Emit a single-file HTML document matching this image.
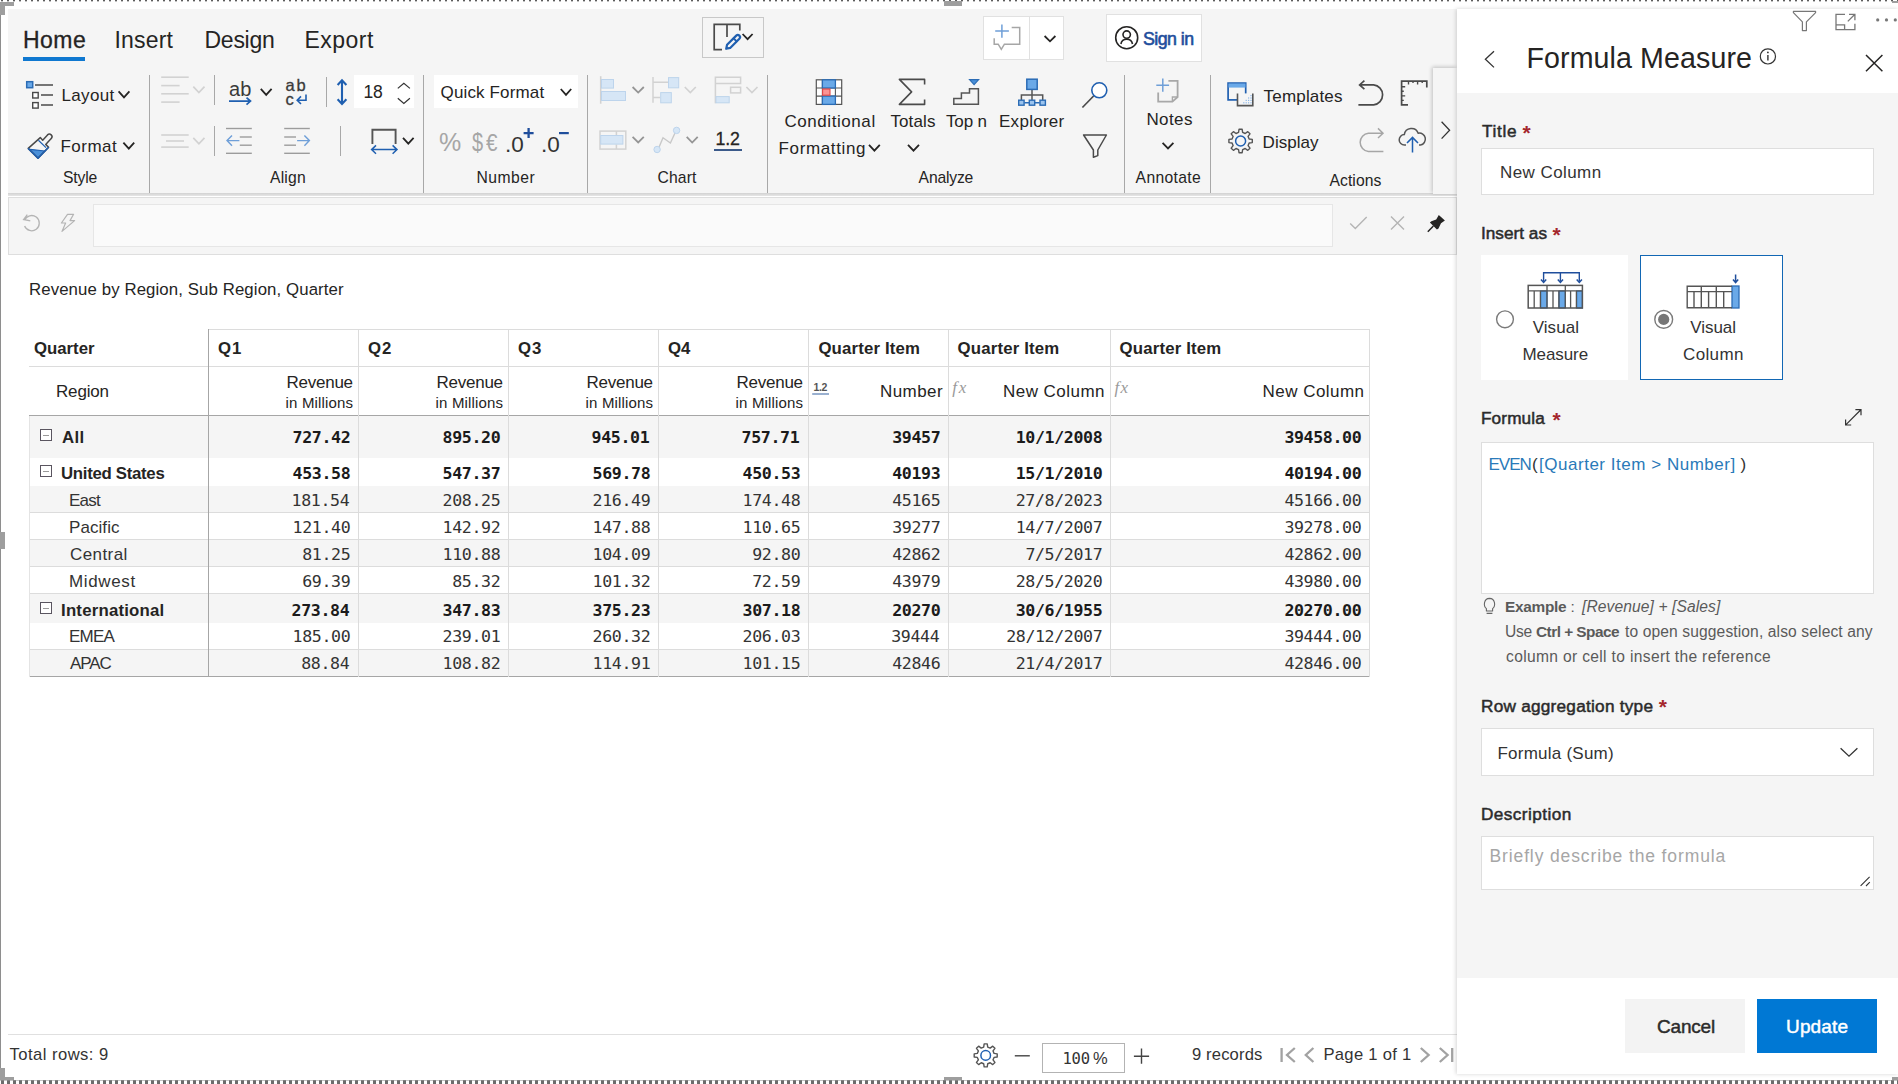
<!DOCTYPE html>
<html lang="en"><head><meta charset="utf-8"><title>Formula Measure</title>
<style>
html,body{margin:0;padding:0;}
body{width:1898px;height:1084px;position:relative;overflow:hidden;background:#fff;font-family:"Liberation Sans",sans-serif;color:#252423;}
.a{position:absolute;display:block;}
.t{position:absolute;white-space:pre;line-height:1;}
</style></head><body>
<div class="a" style="left:8px;top:9px;width:1449px;height:186px;background:#f5f5f5;"></div>
<div class="a" style="left:8px;top:193px;width:1449px;height:3px;background:linear-gradient(#d2d2d2,#e6e6e6);"></div>
<div class="a" style="left:8px;top:197px;width:1449px;height:58px;background:#f5f5f5;border:1px solid #dedede;box-sizing:border-box;"></div>
<div class="a" style="left:93px;top:204px;width:1240px;height:43px;background:#fafafa;border:1px solid #e6e6e6;box-sizing:border-box;"></div>
<div class="t" style="left:23.00px;top:29.01px;font-size:23px;color:#252423;letter-spacing:0.480px;-webkit-text-stroke:0.3px;">Home</div>
<div class="a" style="left:23px;top:57px;width:62px;height:4px;background:#0f78d0;"></div>
<div class="t" style="left:114.50px;top:29.01px;font-size:23px;color:#252423;letter-spacing:0.174px;">Insert</div>
<div class="t" style="left:204.50px;top:29.01px;font-size:23px;color:#252423;letter-spacing:-0.261px;">Design</div>
<div class="t" style="left:304.50px;top:29.01px;font-size:23px;color:#252423;letter-spacing:0.483px;">Export</div>
<div class="a" style="left:149px;top:75px;width:1px;height:118px;background:#a8a8a8;"></div>
<div class="a" style="left:423px;top:75px;width:1px;height:118px;background:#a8a8a8;"></div>
<div class="a" style="left:587px;top:75px;width:1px;height:118px;background:#a8a8a8;"></div>
<div class="a" style="left:767px;top:75px;width:1px;height:118px;background:#a8a8a8;"></div>
<div class="a" style="left:1124px;top:75px;width:1px;height:118px;background:#a8a8a8;"></div>
<div class="a" style="left:1210px;top:75px;width:1px;height:118px;background:#a8a8a8;"></div>
<div class="a" style="left:214px;top:75px;width:1px;height:30px;background:#a8a8a8;"></div>
<div class="a" style="left:326px;top:77px;width:1px;height:30px;background:#a8a8a8;"></div>
<div class="a" style="left:214px;top:126px;width:1px;height:30px;background:#a8a8a8;"></div>
<div class="a" style="left:340px;top:126px;width:1px;height:30px;background:#a8a8a8;"></div>
<div class="t" style="left:61.50px;top:87.00px;font-size:17px;color:#252423;letter-spacing:0.336px;">Layout</div>
<div class="t" style="left:60.50px;top:138.00px;font-size:17px;color:#252423;letter-spacing:0.477px;">Format</div>
<div class="t" style="left:63.00px;top:170.00px;font-size:15.7px;color:#252423;letter-spacing:-0.163px;">Style</div>
<div class="t" style="left:270.00px;top:170.00px;font-size:15.7px;color:#252423;letter-spacing:0.210px;">Align</div>
<div class="a" style="left:354px;top:75px;width:60px;height:33px;background:#fff;"></div>
<div class="t" style="left:363.50px;top:84.01px;font-size:17.5px;color:#252423;letter-spacing:-0.233px;">18</div>
<div class="a" style="left:434px;top:75px;width:144px;height:33px;background:#fff;"></div>
<div class="t" style="left:440.60px;top:84.01px;font-size:17px;color:#252423;letter-spacing:0.137px;">Quick Format</div>
<div class="t" style="left:439.00px;top:130.00px;font-size:25px;color:#a6a6a6;">%</div>
<div class="t" style="left:472.00px;top:130.00px;font-size:25px;color:#a6a6a6;transform:scaleX(.8);transform-origin:0 0;">$</div>
<div class="t" style="left:486.00px;top:131.02px;font-size:24px;color:#a6a6a6;transform:scaleX(.86);transform-origin:0 0;">€</div>
<div class="t" style="left:505.00px;top:134.02px;font-size:22.5px;color:#333;letter-spacing:0.049px;">.0</div>
<div class="t" style="left:541.00px;top:134.02px;font-size:22.5px;color:#333;letter-spacing:0.049px;">.0</div>
<div class="t" style="left:476.60px;top:170.00px;font-size:15.7px;color:#252423;letter-spacing:0.446px;">Number</div>
<div class="t" style="left:715.60px;top:131.00px;font-size:17.8px;color:#252423;letter-spacing:-0.165px;-webkit-text-stroke:0.3px;">1.2</div>
<div class="a" style="left:714px;top:149px;width:28px;height:2px;background:#3b5a8a;"></div>
<div class="t" style="left:657.60px;top:170.00px;font-size:15.7px;color:#252423;letter-spacing:0.099px;">Chart</div>
<div class="t" style="left:784.40px;top:113.01px;font-size:17px;color:#252423;letter-spacing:0.572px;">Conditional</div>
<div class="t" style="left:778.60px;top:140.01px;font-size:17px;color:#252423;letter-spacing:0.623px;">Formatting</div>
<div class="t" style="left:890.40px;top:113.01px;font-size:17px;color:#252423;letter-spacing:0.138px;">Totals</div>
<div class="t" style="left:946.00px;top:113.01px;font-size:17px;color:#252423;letter-spacing:-0.133px;">Top n</div>
<div class="t" style="left:999.00px;top:113.01px;font-size:17px;color:#252423;letter-spacing:0.280px;">Explorer</div>
<div class="t" style="left:918.60px;top:170.00px;font-size:15.7px;color:#252423;letter-spacing:-0.181px;">Analyze</div>
<div class="t" style="left:1146.40px;top:111.01px;font-size:17px;color:#252423;letter-spacing:0.423px;">Notes</div>
<div class="t" style="left:1135.60px;top:170.00px;font-size:15.7px;color:#252423;letter-spacing:0.332px;">Annotate</div>
<div class="t" style="left:1263.60px;top:88.01px;font-size:17px;color:#252423;letter-spacing:0.178px;">Templates</div>
<div class="t" style="left:1262.60px;top:134.01px;font-size:17px;color:#252423;letter-spacing:0.027px;">Display</div>
<div class="t" style="left:1329.60px;top:173.00px;font-size:15.7px;color:#252423;letter-spacing:0.033px;">Actions</div>
<div class="a" style="left:702px;top:17px;width:62px;height:41px;background:#f5f5f5;border:1px solid #c8c8c8;box-sizing:border-box;"></div>
<div class="a" style="left:983px;top:16px;width:81px;height:44px;background:#fff;border:1px solid #e1e1e1;box-sizing:border-box;"></div>
<div class="a" style="left:1029px;top:16px;width:1px;height:44px;background:#e1e1e1;"></div>
<div class="a" style="left:1106px;top:14px;width:96px;height:48px;background:#fff;border:1px solid #e1e1e1;box-sizing:border-box;"></div>
<div class="t" style="left:1143.00px;top:31.01px;font-size:17.8px;color:#1f4e9c;letter-spacing:-0.547px;-webkit-text-stroke:0.6px;">Sign in</div>
<div class="a" style="left:1433px;top:68px;width:24px;height:126px;background:#f5f5f5;box-shadow:-1px -1px 4px rgba(0,0,0,.22);"></div>
<div class="t" style="left:29.00px;top:282.01px;font-size:16.8px;color:#252423;letter-spacing:0.107px;">Revenue by Region, Sub Region, Quarter</div>
<div class="t" style="left:229.00px;top:79.00px;font-size:20px;color:#3a3a3a;letter-spacing:0.077px;">ab</div>
<div class="t" style="left:285.50px;top:77.02px;font-size:16.5px;color:#3a3a3a;letter-spacing:1.723px;-webkit-text-stroke:0.3px;">ab</div>
<div class="t" style="left:285.50px;top:91.01px;font-size:16.5px;color:#3a3a3a;-webkit-text-stroke:0.3px;">c</div>
<div class="t" style="left:813.50px;top:382.01px;font-size:10.5px;color:#555;font-weight:bold;letter-spacing:-0.428px;">1.2</div>
<div class="t" style="left:952.30px;top:379.01px;font-size:17px;color:#9a9a9a;font-family:'Liberation Serif',serif;font-style:italic;letter-spacing:1.677px;">fx</div>
<div class="t" style="left:1114.40px;top:379.01px;font-size:17px;color:#9a9a9a;font-family:'Liberation Serif',serif;font-style:italic;letter-spacing:1.477px;">fx</div>
<div class="a" style="left:29px;top:416px;width:1341px;height:42px;background:#f5f5f5;"></div>
<div class="a" style="left:29px;top:486px;width:1341px;height:27px;background:#f5f5f5;"></div>
<div class="a" style="left:29px;top:540px;width:1341px;height:27px;background:#f5f5f5;"></div>
<div class="a" style="left:29px;top:594px;width:1341px;height:29px;background:#f5f5f5;"></div>
<div class="a" style="left:29px;top:650px;width:1341px;height:27px;background:#f5f5f5;"></div>
<div class="a" style="left:208px;top:329px;width:1162px;height:1px;background:#dcdcdc;"></div>
<div class="a" style="left:29px;top:366px;width:1341px;height:1px;background:#dcdcdc;"></div>
<div class="a" style="left:29px;top:415px;width:1341px;height:1px;background:#a6a6a6;"></div>
<div class="a" style="left:29px;top:512px;width:1341px;height:1px;background:#dcdcdc;"></div>
<div class="a" style="left:29px;top:539px;width:1341px;height:1px;background:#dcdcdc;"></div>
<div class="a" style="left:29px;top:566px;width:1341px;height:1px;background:#dcdcdc;"></div>
<div class="a" style="left:29px;top:593px;width:1341px;height:1px;background:#dcdcdc;"></div>
<div class="a" style="left:29px;top:649px;width:1341px;height:1px;background:#dcdcdc;"></div>
<div class="a" style="left:29px;top:676px;width:1341px;height:1px;background:#a6a6a6;"></div>
<div class="a" style="left:29px;top:416px;width:1px;height:261px;background:#e4e4e4;"></div>
<div class="a" style="left:208px;top:329px;width:1px;height:348px;background:#a6a6a6;"></div>
<div class="a" style="left:358px;top:329px;width:1px;height:348px;background:#dcdcdc;"></div>
<div class="a" style="left:508px;top:329px;width:1px;height:348px;background:#dcdcdc;"></div>
<div class="a" style="left:658px;top:329px;width:1px;height:348px;background:#dcdcdc;"></div>
<div class="a" style="left:808px;top:329px;width:1px;height:348px;background:#dcdcdc;"></div>
<div class="a" style="left:948px;top:329px;width:1px;height:348px;background:#dcdcdc;"></div>
<div class="a" style="left:1110px;top:329px;width:1px;height:348px;background:#dcdcdc;"></div>
<div class="a" style="left:1369px;top:329px;width:1px;height:348px;background:#dcdcdc;"></div>
<div class="t" style="left:34.00px;top:341.01px;font-size:16.8px;color:#252423;font-weight:bold;letter-spacing:-0.015px;">Quarter</div>
<div class="t" style="left:218.00px;top:341.01px;font-size:16.8px;color:#252423;font-weight:bold;letter-spacing:0.947px;">Q1</div>
<div class="t" style="left:368.00px;top:341.01px;font-size:16.8px;color:#252423;font-weight:bold;letter-spacing:0.947px;">Q2</div>
<div class="t" style="left:518.00px;top:341.01px;font-size:16.8px;color:#252423;font-weight:bold;letter-spacing:0.947px;">Q3</div>
<div class="t" style="left:668.00px;top:341.01px;font-size:16.8px;color:#252423;font-weight:bold;letter-spacing:-0.053px;">Q4</div>
<div class="t" style="left:818.40px;top:341.01px;font-size:16.8px;color:#252423;font-weight:bold;letter-spacing:0.158px;">Quarter Item</div>
<div class="t" style="left:957.60px;top:341.01px;font-size:16.8px;color:#252423;font-weight:bold;letter-spacing:0.158px;">Quarter Item</div>
<div class="t" style="left:1119.60px;top:341.01px;font-size:16.8px;color:#252423;font-weight:bold;letter-spacing:0.158px;">Quarter Item</div>
<div class="t" style="left:56.00px;top:383.01px;font-size:17px;color:#252423;letter-spacing:-0.163px;">Region</div>
<div class="t" style="left:286.60px;top:374.00px;font-size:17px;color:#252423;letter-spacing:-0.266px;">Revenue</div>
<div class="t" style="left:285.60px;top:395.01px;font-size:15px;color:#252423;letter-spacing:0.165px;">in Millions</div>
<div class="t" style="left:436.60px;top:374.00px;font-size:17px;color:#252423;letter-spacing:-0.266px;">Revenue</div>
<div class="t" style="left:435.60px;top:395.01px;font-size:15px;color:#252423;letter-spacing:0.165px;">in Millions</div>
<div class="t" style="left:586.60px;top:374.00px;font-size:17px;color:#252423;letter-spacing:-0.266px;">Revenue</div>
<div class="t" style="left:585.60px;top:395.01px;font-size:15px;color:#252423;letter-spacing:0.165px;">in Millions</div>
<div class="t" style="left:736.60px;top:374.00px;font-size:17px;color:#252423;letter-spacing:-0.266px;">Revenue</div>
<div class="t" style="left:735.60px;top:395.01px;font-size:15px;color:#252423;letter-spacing:0.165px;">in Millions</div>
<div class="t" style="left:880.00px;top:383.01px;font-size:17px;color:#252423;letter-spacing:0.440px;">Number</div>
<div class="t" style="left:1003.00px;top:383.01px;font-size:17px;color:#252423;letter-spacing:0.461px;">New Column</div>
<div class="t" style="left:1262.60px;top:383.01px;font-size:17px;color:#252423;letter-spacing:0.461px;">New Column</div>
<div class="t" style="left:62.00px;top:430.00px;font-size:16.8px;color:#252423;font-weight:bold;letter-spacing:0.409px;">All</div>
<div class="t" style="left:292.61px;top:430.01px;font-size:16.6px;color:#1b1b1b;font-weight:bold;font-family:'DejaVu Sans Mono',monospace;letter-spacing:-0.373px;">727.42</div>
<div class="t" style="left:442.61px;top:430.01px;font-size:16.6px;color:#1b1b1b;font-weight:bold;font-family:'DejaVu Sans Mono',monospace;letter-spacing:-0.373px;">895.20</div>
<div class="t" style="left:591.61px;top:430.01px;font-size:16.6px;color:#1b1b1b;font-weight:bold;font-family:'DejaVu Sans Mono',monospace;letter-spacing:-0.373px;">945.01</div>
<div class="t" style="left:741.61px;top:430.01px;font-size:16.6px;color:#1b1b1b;font-weight:bold;font-family:'DejaVu Sans Mono',monospace;letter-spacing:-0.373px;">757.71</div>
<div class="t" style="left:892.23px;top:430.01px;font-size:16.6px;color:#1b1b1b;font-weight:bold;font-family:'DejaVu Sans Mono',monospace;letter-spacing:-0.373px;">39457</div>
<div class="t" style="left:1015.76px;top:430.01px;font-size:16.6px;color:#1b1b1b;font-weight:bold;font-family:'DejaVu Sans Mono',monospace;letter-spacing:-0.373px;">10/1/2008</div>
<div class="t" style="left:1284.38px;top:430.01px;font-size:16.6px;color:#1b1b1b;font-weight:bold;font-family:'DejaVu Sans Mono',monospace;letter-spacing:-0.373px;">39458.00</div>
<div class="a" style="left:40px;top:429px;width:12px;height:12px;background:#fff;border:1px solid #5a5560;box-sizing:border-box;"></div>
<div class="a" style="left:43px;top:434.5px;width:6px;height:1.3px;background:#9a9a9a;"></div>
<div class="t" style="left:61.00px;top:466.00px;font-size:16.8px;color:#252423;font-weight:bold;letter-spacing:-0.292px;">United States</div>
<div class="t" style="left:292.61px;top:466.01px;font-size:16.6px;color:#1b1b1b;font-weight:bold;font-family:'DejaVu Sans Mono',monospace;letter-spacing:-0.373px;">453.58</div>
<div class="t" style="left:442.61px;top:466.01px;font-size:16.6px;color:#1b1b1b;font-weight:bold;font-family:'DejaVu Sans Mono',monospace;letter-spacing:-0.373px;">547.37</div>
<div class="t" style="left:592.61px;top:466.01px;font-size:16.6px;color:#1b1b1b;font-weight:bold;font-family:'DejaVu Sans Mono',monospace;letter-spacing:-0.373px;">569.78</div>
<div class="t" style="left:742.61px;top:466.01px;font-size:16.6px;color:#1b1b1b;font-weight:bold;font-family:'DejaVu Sans Mono',monospace;letter-spacing:-0.373px;">450.53</div>
<div class="t" style="left:892.23px;top:466.01px;font-size:16.6px;color:#1b1b1b;font-weight:bold;font-family:'DejaVu Sans Mono',monospace;letter-spacing:-0.373px;">40193</div>
<div class="t" style="left:1015.76px;top:466.01px;font-size:16.6px;color:#1b1b1b;font-weight:bold;font-family:'DejaVu Sans Mono',monospace;letter-spacing:-0.373px;">15/1/2010</div>
<div class="t" style="left:1284.38px;top:466.01px;font-size:16.6px;color:#1b1b1b;font-weight:bold;font-family:'DejaVu Sans Mono',monospace;letter-spacing:-0.373px;">40194.00</div>
<div class="a" style="left:40px;top:465px;width:12px;height:12px;background:#fff;border:1px solid #5a5560;box-sizing:border-box;"></div>
<div class="a" style="left:43px;top:470.5px;width:6px;height:1.3px;background:#9a9a9a;"></div>
<div class="t" style="left:69.00px;top:492.01px;font-size:17px;color:#333;letter-spacing:-0.764px;">East</div>
<div class="t" style="left:291.61px;top:493.01px;font-size:16.6px;color:#333;font-family:'DejaVu Sans Mono',monospace;letter-spacing:-0.373px;">181.54</div>
<div class="t" style="left:442.61px;top:493.01px;font-size:16.6px;color:#333;font-family:'DejaVu Sans Mono',monospace;letter-spacing:-0.373px;">208.25</div>
<div class="t" style="left:592.61px;top:493.01px;font-size:16.6px;color:#333;font-family:'DejaVu Sans Mono',monospace;letter-spacing:-0.373px;">216.49</div>
<div class="t" style="left:742.61px;top:493.01px;font-size:16.6px;color:#333;font-family:'DejaVu Sans Mono',monospace;letter-spacing:-0.373px;">174.48</div>
<div class="t" style="left:892.23px;top:493.01px;font-size:16.6px;color:#333;font-family:'DejaVu Sans Mono',monospace;letter-spacing:-0.373px;">45165</div>
<div class="t" style="left:1015.76px;top:493.01px;font-size:16.6px;color:#333;font-family:'DejaVu Sans Mono',monospace;letter-spacing:-0.373px;">27/8/2023</div>
<div class="t" style="left:1284.38px;top:493.01px;font-size:16.6px;color:#333;font-family:'DejaVu Sans Mono',monospace;letter-spacing:-0.373px;">45166.00</div>
<div class="t" style="left:69.00px;top:519.01px;font-size:17px;color:#333;letter-spacing:0.072px;">Pacific</div>
<div class="t" style="left:292.61px;top:520.00px;font-size:16.6px;color:#333;font-family:'DejaVu Sans Mono',monospace;letter-spacing:-0.373px;">121.40</div>
<div class="t" style="left:442.61px;top:520.00px;font-size:16.6px;color:#333;font-family:'DejaVu Sans Mono',monospace;letter-spacing:-0.373px;">142.92</div>
<div class="t" style="left:592.61px;top:520.00px;font-size:16.6px;color:#333;font-family:'DejaVu Sans Mono',monospace;letter-spacing:-0.373px;">147.88</div>
<div class="t" style="left:742.61px;top:520.00px;font-size:16.6px;color:#333;font-family:'DejaVu Sans Mono',monospace;letter-spacing:-0.373px;">110.65</div>
<div class="t" style="left:892.23px;top:520.00px;font-size:16.6px;color:#333;font-family:'DejaVu Sans Mono',monospace;letter-spacing:-0.373px;">39277</div>
<div class="t" style="left:1015.76px;top:520.00px;font-size:16.6px;color:#333;font-family:'DejaVu Sans Mono',monospace;letter-spacing:-0.373px;">14/7/2007</div>
<div class="t" style="left:1284.38px;top:520.00px;font-size:16.6px;color:#333;font-family:'DejaVu Sans Mono',monospace;letter-spacing:-0.373px;">39278.00</div>
<div class="t" style="left:70.00px;top:546.01px;font-size:17px;color:#333;letter-spacing:0.413px;">Central</div>
<div class="t" style="left:302.23px;top:547.01px;font-size:16.6px;color:#333;font-family:'DejaVu Sans Mono',monospace;letter-spacing:-0.373px;">81.25</div>
<div class="t" style="left:442.61px;top:547.01px;font-size:16.6px;color:#333;font-family:'DejaVu Sans Mono',monospace;letter-spacing:-0.373px;">110.88</div>
<div class="t" style="left:592.61px;top:547.01px;font-size:16.6px;color:#333;font-family:'DejaVu Sans Mono',monospace;letter-spacing:-0.373px;">104.09</div>
<div class="t" style="left:752.23px;top:547.01px;font-size:16.6px;color:#333;font-family:'DejaVu Sans Mono',monospace;letter-spacing:-0.373px;">92.80</div>
<div class="t" style="left:892.23px;top:547.01px;font-size:16.6px;color:#333;font-family:'DejaVu Sans Mono',monospace;letter-spacing:-0.373px;">42862</div>
<div class="t" style="left:1025.38px;top:547.01px;font-size:16.6px;color:#333;font-family:'DejaVu Sans Mono',monospace;letter-spacing:-0.373px;">7/5/2017</div>
<div class="t" style="left:1284.38px;top:547.01px;font-size:16.6px;color:#333;font-family:'DejaVu Sans Mono',monospace;letter-spacing:-0.373px;">42862.00</div>
<div class="t" style="left:69.00px;top:573.01px;font-size:17px;color:#333;letter-spacing:0.646px;">Midwest</div>
<div class="t" style="left:302.23px;top:574.00px;font-size:16.6px;color:#333;font-family:'DejaVu Sans Mono',monospace;letter-spacing:-0.373px;">69.39</div>
<div class="t" style="left:452.23px;top:574.00px;font-size:16.6px;color:#333;font-family:'DejaVu Sans Mono',monospace;letter-spacing:-0.373px;">85.32</div>
<div class="t" style="left:592.61px;top:574.00px;font-size:16.6px;color:#333;font-family:'DejaVu Sans Mono',monospace;letter-spacing:-0.373px;">101.32</div>
<div class="t" style="left:752.23px;top:574.00px;font-size:16.6px;color:#333;font-family:'DejaVu Sans Mono',monospace;letter-spacing:-0.373px;">72.59</div>
<div class="t" style="left:892.23px;top:574.00px;font-size:16.6px;color:#333;font-family:'DejaVu Sans Mono',monospace;letter-spacing:-0.373px;">43979</div>
<div class="t" style="left:1015.76px;top:574.00px;font-size:16.6px;color:#333;font-family:'DejaVu Sans Mono',monospace;letter-spacing:-0.373px;">28/5/2020</div>
<div class="t" style="left:1284.38px;top:574.00px;font-size:16.6px;color:#333;font-family:'DejaVu Sans Mono',monospace;letter-spacing:-0.373px;">43980.00</div>
<div class="t" style="left:61.00px;top:603.00px;font-size:16.8px;color:#252423;font-weight:bold;letter-spacing:0.214px;">International</div>
<div class="t" style="left:291.61px;top:603.01px;font-size:16.6px;color:#1b1b1b;font-weight:bold;font-family:'DejaVu Sans Mono',monospace;letter-spacing:-0.373px;">273.84</div>
<div class="t" style="left:442.61px;top:603.01px;font-size:16.6px;color:#1b1b1b;font-weight:bold;font-family:'DejaVu Sans Mono',monospace;letter-spacing:-0.373px;">347.83</div>
<div class="t" style="left:592.61px;top:603.01px;font-size:16.6px;color:#1b1b1b;font-weight:bold;font-family:'DejaVu Sans Mono',monospace;letter-spacing:-0.373px;">375.23</div>
<div class="t" style="left:742.61px;top:603.01px;font-size:16.6px;color:#1b1b1b;font-weight:bold;font-family:'DejaVu Sans Mono',monospace;letter-spacing:-0.373px;">307.18</div>
<div class="t" style="left:892.23px;top:603.01px;font-size:16.6px;color:#1b1b1b;font-weight:bold;font-family:'DejaVu Sans Mono',monospace;letter-spacing:-0.373px;">20270</div>
<div class="t" style="left:1015.76px;top:603.01px;font-size:16.6px;color:#1b1b1b;font-weight:bold;font-family:'DejaVu Sans Mono',monospace;letter-spacing:-0.373px;">30/6/1955</div>
<div class="t" style="left:1284.38px;top:603.01px;font-size:16.6px;color:#1b1b1b;font-weight:bold;font-family:'DejaVu Sans Mono',monospace;letter-spacing:-0.373px;">20270.00</div>
<div class="a" style="left:40px;top:602px;width:12px;height:12px;background:#fff;border:1px solid #5a5560;box-sizing:border-box;"></div>
<div class="a" style="left:43px;top:607.5px;width:6px;height:1.3px;background:#9a9a9a;"></div>
<div class="t" style="left:69.00px;top:628.01px;font-size:17px;color:#333;letter-spacing:-0.780px;">EMEA</div>
<div class="t" style="left:292.61px;top:629.01px;font-size:16.6px;color:#333;font-family:'DejaVu Sans Mono',monospace;letter-spacing:-0.373px;">185.00</div>
<div class="t" style="left:442.61px;top:629.01px;font-size:16.6px;color:#333;font-family:'DejaVu Sans Mono',monospace;letter-spacing:-0.373px;">239.01</div>
<div class="t" style="left:592.61px;top:629.01px;font-size:16.6px;color:#333;font-family:'DejaVu Sans Mono',monospace;letter-spacing:-0.373px;">260.32</div>
<div class="t" style="left:742.61px;top:629.01px;font-size:16.6px;color:#333;font-family:'DejaVu Sans Mono',monospace;letter-spacing:-0.373px;">206.03</div>
<div class="t" style="left:891.23px;top:629.01px;font-size:16.6px;color:#333;font-family:'DejaVu Sans Mono',monospace;letter-spacing:-0.373px;">39444</div>
<div class="t" style="left:1006.15px;top:629.01px;font-size:16.6px;color:#333;font-family:'DejaVu Sans Mono',monospace;letter-spacing:-0.373px;">28/12/2007</div>
<div class="t" style="left:1284.38px;top:629.01px;font-size:16.6px;color:#333;font-family:'DejaVu Sans Mono',monospace;letter-spacing:-0.373px;">39444.00</div>
<div class="t" style="left:70.00px;top:655.01px;font-size:17px;color:#333;letter-spacing:-1.085px;">APAC</div>
<div class="t" style="left:301.23px;top:656.00px;font-size:16.6px;color:#333;font-family:'DejaVu Sans Mono',monospace;letter-spacing:-0.373px;">88.84</div>
<div class="t" style="left:442.61px;top:656.00px;font-size:16.6px;color:#333;font-family:'DejaVu Sans Mono',monospace;letter-spacing:-0.373px;">108.82</div>
<div class="t" style="left:592.61px;top:656.00px;font-size:16.6px;color:#333;font-family:'DejaVu Sans Mono',monospace;letter-spacing:-0.373px;">114.91</div>
<div class="t" style="left:742.61px;top:656.00px;font-size:16.6px;color:#333;font-family:'DejaVu Sans Mono',monospace;letter-spacing:-0.373px;">101.15</div>
<div class="t" style="left:892.23px;top:656.00px;font-size:16.6px;color:#333;font-family:'DejaVu Sans Mono',monospace;letter-spacing:-0.373px;">42846</div>
<div class="t" style="left:1015.76px;top:656.00px;font-size:16.6px;color:#333;font-family:'DejaVu Sans Mono',monospace;letter-spacing:-0.373px;">21/4/2017</div>
<div class="t" style="left:1284.38px;top:656.00px;font-size:16.6px;color:#333;font-family:'DejaVu Sans Mono',monospace;letter-spacing:-0.373px;">42846.00</div>
<div class="a" style="left:8px;top:1034px;width:1449px;height:1px;background:#e0e0e0;"></div>
<div class="t" style="left:9.50px;top:1047.01px;font-size:16.6px;color:#333;letter-spacing:0.465px;">Total rows: 9</div>
<div class="a" style="left:1042px;top:1043px;width:83px;height:30px;background:#fff;border:1px solid #b3b3b3;box-sizing:border-box;"></div>
<div class="t" style="left:1062.44px;top:1052.01px;font-size:15.5px;color:#333;font-family:'DejaVu Sans Mono',monospace;letter-spacing:-0.200px;">100</div>
<div class="t" style="left:1093.00px;top:1050.01px;font-size:16.5px;color:#333;">%</div>
<div class="t" style="left:1192.00px;top:1047.01px;font-size:16.6px;color:#333;letter-spacing:0.141px;">9 records</div>
<div class="t" style="left:1323.50px;top:1047.01px;font-size:16.6px;color:#333;letter-spacing:0.285px;">Page 1 of 1</div>
<div class="a" style="left:1457px;top:9px;width:441px;height:1065px;background:#f5f5f5;box-shadow:-1px 0 4px rgba(0,0,0,.17);"></div>
<div class="a" style="left:1457px;top:9px;width:441px;height:84px;background:#fff;"></div>
<div class="a" style="left:1457px;top:978px;width:441px;height:96px;background:#fff;"></div>
<div class="t" style="left:1526.50px;top:44.01px;font-size:28.6px;color:#252423;letter-spacing:0.096px;">Formula Measure</div>
<div class="t" style="left:1482.00px;top:123.00px;font-size:17.2px;color:#2b2b2b;letter-spacing:0.682px;-webkit-text-stroke:0.5px;">Title</div>
<div class="t" style="left:1522.50px;top:122.01px;font-size:21px;color:#a4262c;font-weight:bold;">*</div>
<div class="a" style="left:1481px;top:148px;width:393px;height:47px;background:#fff;border:1px solid #dedede;box-sizing:border-box;"></div>
<div class="t" style="left:1500.00px;top:164.01px;font-size:17px;color:#333;letter-spacing:0.427px;">New Column</div>
<div class="t" style="left:1481.00px;top:225.00px;font-size:17.2px;color:#2b2b2b;letter-spacing:0.010px;-webkit-text-stroke:0.5px;">Insert as</div>
<div class="t" style="left:1552.50px;top:224.01px;font-size:21px;color:#a4262c;font-weight:bold;">*</div>
<div class="a" style="left:1481px;top:255px;width:147px;height:125px;background:#fff;"></div>
<div class="a" style="left:1640px;top:255px;width:143px;height:125px;background:#fff;border:1px solid #1267b4;box-sizing:border-box;"></div>
<div class="t" style="left:1532.70px;top:319.00px;font-size:17px;color:#333;letter-spacing:0.056px;">Visual</div>
<div class="t" style="left:1522.50px;top:346.01px;font-size:17px;color:#333;letter-spacing:-0.081px;">Measure</div>
<div class="t" style="left:1690.20px;top:319.00px;font-size:17px;color:#333;letter-spacing:-0.024px;">Visual</div>
<div class="t" style="left:1683.00px;top:346.01px;font-size:17px;color:#333;letter-spacing:0.355px;">Column</div>
<div class="t" style="left:1481.00px;top:410.00px;font-size:17.2px;color:#2b2b2b;letter-spacing:0.121px;-webkit-text-stroke:0.5px;">Formula</div>
<div class="t" style="left:1552.50px;top:409.01px;font-size:21px;color:#a4262c;font-weight:bold;">*</div>
<div class="a" style="left:1481px;top:442px;width:393px;height:152px;background:#fff;border:1px solid #dedede;box-sizing:border-box;"></div>
<div class="t" style="left:1488.50px;top:456.01px;font-size:17px;color:#2a7ab9;letter-spacing:-1.006px;">EVEN</div>
<div class="t" style="left:1532.00px;top:456.01px;font-size:17px;color:#333;">(</div>
<div class="t" style="left:1539.00px;top:456.01px;font-size:17px;color:#2a7ab9;letter-spacing:0.524px;">[Quarter Item &gt; Number]</div>
<div class="t" style="left:1740.50px;top:456.01px;font-size:17px;color:#333;">)</div>
<div class="t" style="left:1505.00px;top:599.01px;font-size:15.4px;color:#5a5a5a;font-weight:bold;letter-spacing:-0.291px;">Example</div>
<div class="t" style="left:1570.50px;top:599.01px;font-size:15.4px;color:#5a5a5a;">:</div>
<div class="t" style="left:1582.00px;top:599.01px;font-size:15.6px;color:#5a5a5a;font-style:italic;letter-spacing:0.100px;">[Revenue] + [Sales]</div>
<div class="t" style="left:1505.00px;top:624.02px;font-size:15.6px;color:#5a5a5a;letter-spacing:-0.279px;">Use</div>
<div class="t" style="left:1536.00px;top:624.01px;font-size:15.4px;color:#5a5a5a;font-weight:bold;letter-spacing:-0.530px;">Ctrl + Space</div>
<div class="t" style="left:1625.00px;top:624.02px;font-size:15.6px;color:#5a5a5a;letter-spacing:0.118px;">to open suggestion, also select any</div>
<div class="t" style="left:1506.00px;top:649.01px;font-size:15.6px;color:#5a5a5a;letter-spacing:0.337px;">column or cell to insert the reference</div>
<div class="t" style="left:1481.00px;top:698.02px;font-size:17.2px;color:#2b2b2b;letter-spacing:0.250px;-webkit-text-stroke:0.5px;">Row aggregation type</div>
<div class="t" style="left:1658.80px;top:696.01px;font-size:21px;color:#a4262c;font-weight:bold;">*</div>
<div class="a" style="left:1481px;top:728px;width:393px;height:48px;background:#fff;border:1px solid #dedede;box-sizing:border-box;"></div>
<div class="t" style="left:1497.50px;top:745.01px;font-size:17px;color:#333;letter-spacing:0.234px;">Formula (Sum)</div>
<div class="t" style="left:1481.00px;top:806.01px;font-size:17.2px;color:#2b2b2b;letter-spacing:0.429px;-webkit-text-stroke:0.5px;">Description</div>
<div class="a" style="left:1481px;top:836px;width:393px;height:54px;background:#fff;border:1px solid #dedede;box-sizing:border-box;"></div>
<div class="t" style="left:1489.50px;top:848.00px;font-size:17.5px;color:#a6a6a6;letter-spacing:0.878px;">Briefly describe the formula</div>
<div class="a" style="left:1625px;top:999px;width:120px;height:54px;background:#f3f3f3;"></div>
<div class="t" style="left:1657.00px;top:1017.00px;font-size:19px;color:#2b2b2b;letter-spacing:-0.184px;-webkit-text-stroke:0.45px;">Cancel</div>
<div class="a" style="left:1757px;top:999px;width:120px;height:54px;background:#0078d4;"></div>
<div class="t" style="left:1786.00px;top:1017.00px;font-size:19px;color:#fff;letter-spacing:0.160px;-webkit-text-stroke:0.45px;">Update</div>
<svg class="a" style="left:0px;top:0px;" width="1898" height="1084" viewBox="0 0 1898 1084" fill="none"><rect x="26.7" y="81.7" width="6" height="6" stroke="#2b6cb5" stroke-width="1.5" fill="#6aa9e8" /><path d="M35 85L53 85" stroke="#4a4a4a" stroke-width="1.5" /><rect x="32.7" y="92.5" width="5.5" height="5.5" stroke="#4a4a4a" stroke-width="1.4" fill="#fff" /><path d="M41 95L53 95" stroke="#4a4a4a" stroke-width="1.5" /><rect x="32.7" y="102.6" width="5.5" height="5.5" stroke="#4a4a4a" stroke-width="1.4" fill="#fff" /><path d="M41 105L53 105" stroke="#4a4a4a" stroke-width="1.5" /><path d="M118.6 91.4L124.0 97.4L129.4 91.4" stroke="#252423" stroke-width="1.8" fill="none"/><path d="M30 149.3L45 151L38 158Z" stroke="none" stroke-width="0" fill="#4a90d9" /><path d="M40.3 137.6L28.2 148.4L38 158.2L48.6 147.3L45.7 144.4L51.2 138.6A2.6 2.6 0 0 0 47.5 134.9L42.7 140.2Z" stroke="#4a4a4a" stroke-width="1.5" fill="none" stroke-linejoin="round"/><path d="M28.2 148.4L38 158.2L48.6 147.3" stroke="#1f5fb0" stroke-width="1.6" fill="none" stroke-linejoin="round"/><path d="M30 149.3L45 151" stroke="#1f5fb0" stroke-width="1.2" /><path d="M38.4 140.3L46 147.6" stroke="#1f5fb0" stroke-width="1.2" /><path d="M123.4 142.6L128.8 148.6L134.2 142.6" stroke="#252423" stroke-width="1.8" fill="none"/><path d="M161.2 77.2L188.7 77.2" stroke="#d2d2d2" stroke-width="1.6" /><path d="M161.2 85.6L179.6 85.6" stroke="#d2d2d2" stroke-width="1.6" /><path d="M161.2 93.8L188.7 93.8" stroke="#d2d2d2" stroke-width="1.6" /><path d="M161.2 102.1L179.6 102.1" stroke="#d2d2d2" stroke-width="1.6" /><path d="M193.3 86.6L198.9 92.6L204.5 86.6" stroke="#d2d2d2" stroke-width="1.7" fill="none"/><path d="M161.2 135L188.7 135" stroke="#d2d2d2" stroke-width="1.6" /><path d="M166 141L184 141" stroke="#d2d2d2" stroke-width="1.6" /><path d="M161.2 147.1L188.7 147.1" stroke="#d2d2d2" stroke-width="1.6" /><path d="M193.3 137.8L198.9 143.8L204.5 137.8" stroke="#d2d2d2" stroke-width="1.7" fill="none"/><path d="M229 101.1H250.5M246.5 97.6L250.5 101.1L246.5 104.6" stroke="#1f5fb0" stroke-width="1.7" fill="none" /><path d="M260.8 88.8L266.20000000000005 94.8L271.6 88.8" stroke="#252423" stroke-width="1.8" fill="none"/><path d="M306 94.5V100.2H297.2M301 96.4L297.2 100.2L301 104" stroke="#1f5fb0" stroke-width="1.6" fill="none" /><path d="M342 80.5V103.6M337.6 85L342 80.3L346.4 85M337.6 99.2L342 103.9L346.4 99.2" stroke="#1f5fb0" stroke-width="2.1" fill="none" /><path d="M397.8 88.4L403.85 83.2L409.9 88.4" stroke="#333" stroke-width="1.2" fill="none"/><path d="M397.8 98.2L403.85 103.5L409.9 98.2" stroke="#333" stroke-width="1.2" fill="none"/><path d="M226 128.5L251.8 128.5" stroke="#9c9c9c" stroke-width="1.4" /><path d="M239.8 137L251.8 137" stroke="#9c9c9c" stroke-width="1.4" /><path d="M239.8 145.2L251.8 145.2" stroke="#9c9c9c" stroke-width="1.4" /><path d="M226 153.3L251.8 153.3" stroke="#9c9c9c" stroke-width="1.4" /><path d="M239.4 140.6H227M232 135.4L227 140.6L232 145.8" stroke="#6f9fd8" stroke-width="1.4" fill="none" /><path d="M284.2 128.5L309.8 128.5" stroke="#9c9c9c" stroke-width="1.4" /><path d="M284.2 137L296 137" stroke="#9c9c9c" stroke-width="1.4" /><path d="M284.2 145.2L296 145.2" stroke="#9c9c9c" stroke-width="1.4" /><path d="M284.2 153.3L309.8 153.3" stroke="#9c9c9c" stroke-width="1.4" /><path d="M297.1 140.6H309.4M304.4 135.4L309.4 140.6L304.4 145.8" stroke="#6f9fd8" stroke-width="1.4" fill="none" /><path d="M372.4 144V129.7H395.6V144" stroke="#555" stroke-width="1.9" fill="none" /><path d="M371.8 149.6H396.8M376 145.4L371.6 149.6L376 153.8M392.6 145.4L397 149.6L392.6 153.8" stroke="#1f5fb0" stroke-width="1.5" fill="none" /><path d="M403 137.9L408.3 143.6L413.6 137.9" stroke="#252423" stroke-width="1.8" fill="none"/><path d="M560.8 89L566.0 94.8L571.2 89" stroke="#252423" stroke-width="1.8" fill="none"/><path d="M523.6 133.1H533.6M528.6 128.1V138.1" stroke="#1f4e9c" stroke-width="2.3" fill="none" /><path d="M559 133.1H568.8" stroke="#1f4e9c" stroke-width="2.2" fill="none" /><path d="M600.7 76.2L600.7 103.7" stroke="#d2d2d2" stroke-width="1.6" /><rect x="601.5" y="79.5" width="12" height="8.6" stroke="#bdd4ec" stroke-width="1" fill="#d6e6f6" /><rect x="601.5" y="91.5" width="24" height="9" stroke="#bdd4ec" stroke-width="1" fill="#d6e6f6" /><path d="M632.6 87L638.2 92.6L643.8 87" stroke="#959595" stroke-width="1.8" fill="none"/><path d="M653 77.1V102.7M653 82.3H668M653 97.5H660.2" stroke="#d2d2d2" stroke-width="1.5" fill="none" /><rect x="668.5" y="77.6" width="10.2" height="10.2" stroke="#bdd4ec" stroke-width="1" fill="#d6e6f6" /><rect x="660.7" y="92.6" width="10.6" height="10.2" stroke="#bdd4ec" stroke-width="1" fill="#d6e6f6" /><path d="M684.8 87L690.3 92.6L695.8 87" stroke="#d2d2d2" stroke-width="1.7" fill="none"/><path d="M715.4 103.2V77.3H740.6V83.4H715.4" stroke="#d2d2d2" stroke-width="1.5" fill="none" /><rect x="730.6" y="87.3" width="10" height="5.6" stroke="#d2d2d2" stroke-width="1.5" fill="none" /><rect x="716" y="96.6" width="13.2" height="6.2" stroke="#bdd4ec" stroke-width="1" fill="#d6e6f6" /><path d="M746.4 87L751.95 92.6L757.5 87" stroke="#d2d2d2" stroke-width="1.7" fill="none"/><rect x="600" y="131.1" width="25.8" height="18" stroke="#d2d2d2" stroke-width="1.5" fill="none" /><path d="M616.4 131V135M616.4 144.5V149" stroke="#d2d2d2" stroke-width="1.5" fill="none" /><rect x="600.7" y="135.5" width="22.2" height="8.6" stroke="#bdd4ec" stroke-width="1" fill="#d6e6f6" /><path d="M632.6 136.8L638.2 142.5L643.8 136.8" stroke="#959595" stroke-width="1.8" fill="none"/><path d="M659 147.3L663 137.8L670.4 143L675 133" stroke="#c8c8c8" stroke-width="1.4" fill="none" /><circle cx="657.1" cy="149.5" r="3.2" stroke="#bdd4ec" stroke-width="1" fill="#d6e6f6"/><circle cx="676.6" cy="130.4" r="3.2" stroke="#bdd4ec" stroke-width="1" fill="#d6e6f6"/><path d="M686.7 136.8L692.2 142.5L697.7 136.8" stroke="#959595" stroke-width="1.8" fill="none"/><rect x="816.3" y="79.8" width="25.4" height="24.6" stroke="#555" stroke-width="1.2" fill="#fff" /><path d="M816 88H842M816 96.1H842M822.4 80V104.6M835.4 80V104.6" stroke="#555" stroke-width="1.1" fill="none" /><rect x="822.4" y="79.8" width="13" height="8.2" stroke="#2b6cb5" stroke-width="1.3" fill="#6aa9e8" /><rect x="822.4" y="96.1" width="13" height="8.3" stroke="#2b6cb5" stroke-width="1.3" fill="#6aa9e8" /><rect x="822.6" y="89" width="7.4" height="6.2" stroke="#e04848" stroke-width="1.1" fill="#fb9494" /><path d="M869 144.8L874.4 150.7L879.8 144.8" stroke="#252423" stroke-width="1.8" fill="none"/><path d="M924.6 84.6V79.4H899.4L911.6 91.9L899.4 104.4H924.6V99.6" stroke="#4a4a4a" stroke-width="1.6" fill="none" stroke-linejoin="round"/><path d="M908 144.8L913.5 150.7L919 144.8" stroke="#252423" stroke-width="1.8" fill="none"/><path d="M953.8 104.2V98.5H961.4V93H969.5V88.7H978.4V104.2Z" stroke="#555" stroke-width="1.5" fill="none" /><path d="M969.6 79.6H978.6L974.1 84.6Z" stroke="#2b6cb5" stroke-width="1.2" fill="#4a90d9" /><path d="M1032 89.5V100M1021.4 100V95H1042.7V100" stroke="#555" stroke-width="1.5" fill="none" /><rect x="1026.8" y="79.2" width="10.4" height="10.2" stroke="#2b6cb5" stroke-width="1.5" fill="#6aa9e8" /><path d="M1024.4 102.7H1029M1035 102.7H1039.7" stroke="#2b6cb5" stroke-width="1.4" fill="none" /><rect x="1018.6999999999999" y="100.2" width="5.4" height="5" stroke="#2b6cb5" stroke-width="1.4" fill="#9cc4ee" /><rect x="1029.3" y="100.2" width="5.4" height="5" stroke="#2b6cb5" stroke-width="1.4" fill="#9cc4ee" /><rect x="1040.0" y="100.2" width="5.4" height="5" stroke="#2b6cb5" stroke-width="1.4" fill="#9cc4ee" /><path d="M1093.6 96L1082.4 107.5" stroke="#4a4a4a" stroke-width="1.7" /><circle cx="1099.3" cy="90.3" r="7.5" stroke="#1f5fb0" stroke-width="1.6" fill="#fff"/><path d="M1083.6 135H1106.4L1097.8 150V155.6L1093.4 157.2V150Z" stroke="#4a4a4a" stroke-width="1.5" fill="none" stroke-linejoin="round"/><path d="M1168.4 80.9H1177.6V97L1172.4 101.7H1158.2V92.4" stroke="#a8a8a8" stroke-width="1.8" fill="none" /><path d="M1172.4 101.7V97H1177.6" stroke="#a8a8a8" stroke-width="1.4" fill="none" /><path d="M1156.3 85.3H1169.1M1162.8 78.4V91.8" stroke="#6f9fd8" stroke-width="1.5" fill="none" /><path d="M1162.6 142.8L1168.0 148.4L1173.4 142.8" stroke="#252423" stroke-width="1.8" fill="none"/><rect x="1228.1" y="83.1" width="17.6" height="16.8" stroke="#1f5fb0" stroke-width="1.7" fill="#f5f5f5" /><path d="M1228.5 83.5H1245.5V87.6H1228.5Z" stroke="none" stroke-width="0" fill="#6aa9e8" /><path d="M1237.5 93.4V105.6H1252.8V93.4" stroke="#555" stroke-width="1.6" fill="#f5f5f5" /><rect x="1245.6" y="102.2" width="1.2" height="1.2" fill="#8db8e8"/><rect x="1248.0" y="102.2" width="1.2" height="1.2" fill="#8db8e8"/><rect x="1250.3999999999999" y="102.2" width="1.2" height="1.2" fill="#8db8e8"/><rect x="1248.0" y="99.8" width="1.2" height="1.2" fill="#8db8e8"/><rect x="1250.3999999999999" y="99.8" width="1.2" height="1.2" fill="#8db8e8"/><rect x="1250.3999999999999" y="97.4" width="1.2" height="1.2" fill="#8db8e8"/><rect x="1243.1999999999998" y="102.2" width="1.2" height="1.2" fill="#8db8e8"/><rect x="1245.6" y="99.8" width="1.2" height="1.2" fill="#8db8e8"/><rect x="1248.0" y="97.4" width="1.2" height="1.2" fill="#8db8e8"/><rect x="1250.3999999999999" y="95.0" width="1.2" height="1.2" fill="#8db8e8"/><path d="M1358.4 104.8H1373.6A10 10 0 0 0 1373.6 84.9H1359.6M1364.4 80.6L1359.6 84.9L1364.4 89.2" stroke="#4a4a4a" stroke-width="1.7" fill="none" /><path d="M1408 104.8H1401.6V81.1H1426.8V87.4" stroke="#4a4a4a" stroke-width="1.7" fill="none" /><path d="M1408.5 81V84.6M1413 81V83M1417.6 81V84.6M1422.2 81V83M1401.6 86.8H1405.2M1401.6 91.3H1403.8M1401.6 95.9H1405.2M1401.6 100.4H1403.8" stroke="#4a4a4a" stroke-width="1.4" fill="none" /><path d="M1383.4 151.5H1368.4A9.2 9.2 0 0 1 1368.4 133.2H1382.6M1378 128.4L1383 133.2L1378 138" stroke="#a6a6a6" stroke-width="1.5" fill="none" /><path d="M1406 145H1404.5A5.2 5.2 0 0 1 1404.3 134.6A7.2 7.2 0 0 1 1418.2 133.2A6 6 0 0 1 1420.5 145H1419" stroke="#555" stroke-width="1.5" fill="none" /><path d="M1412.5 152.6V137.6M1407 143L1412.5 137.4L1418 143" stroke="#1f5fb0" stroke-width="1.5" fill="none" /><path d="M1441.6 121.8L1449.6 130.2L1441.6 138.6" stroke="#333" stroke-width="1.3" fill="none" /><path d="M1249.16 138.95L1252.29 139.43L1252.29 142.57L1249.16 143.05L1248.10 145.60L1249.98 148.16L1247.76 150.38L1245.20 148.50L1242.65 149.56L1242.17 152.69L1239.03 152.69L1238.55 149.56L1236.00 148.50L1233.44 150.38L1231.22 148.16L1233.10 145.60L1232.04 143.05L1228.91 142.57L1228.91 139.43L1232.04 138.95L1233.10 136.40L1231.22 133.84L1233.44 131.62L1236.00 133.50L1238.55 132.44L1239.03 129.31L1242.17 129.31L1242.65 132.44L1245.20 133.50L1247.76 131.62L1249.98 133.84L1248.10 136.40Z" stroke="#555" stroke-width="1.4" fill="none" stroke-linejoin="round"/><circle cx="1240.6" cy="141" r="5" stroke="#1f5fb0" stroke-width="1.5" fill="none"/><path d="M722 49.6H714.2V24.4H739.8V30.4M727 24.4V37" stroke="#4a4a4a" stroke-width="1.7" fill="none" /><g transform="rotate(45 733 42)"><path d="M730.8 35.2A2.2 2.2 0 0 1 735.2 35.2V48.2L733 51.6L730.8 48.2Z" stroke="#1f5fb0" stroke-width="2.2" fill="#f5f5f5" stroke-linejoin="round"/><path d="M730 39H736" stroke="#1f5fb0" stroke-width="1.8"/></g><path d="M742.6 34L747.6 39.2L752.6 34" stroke="#252423" stroke-width="1.8" fill="none"/><path d="M1011.7 27.4H1019.7V44.2H1004.4L1001.3 49.4L998.2 44.2H994.2V38.3" stroke="#a6a6a6" stroke-width="1.5" fill="none" /><path d="M995.2 31.1H1008.9M1001.9 24.4V37.7" stroke="#6f9fd8" stroke-width="1.5" fill="none" /><path d="M1044.6 36L1050.0 41.3L1055.4 36" stroke="#252423" stroke-width="1.8" fill="none"/><circle cx="1126.7" cy="37.7" r="11" stroke="#252423" stroke-width="1.6" fill="none"/><circle cx="1126.7" cy="34.6" r="3.7" stroke="#252423" stroke-width="1.6" fill="none"/><path d="M1120.9 44A5.9 5.9 0 0 1 1132.5 44" stroke="#252423" stroke-width="1.6" fill="none" /><path d="M27.3 214.6L23.6 219.5L30.3 220.9M24.6 220.3A7.6 7.6 0 1 1 24.6 226" stroke="#b4b4b4" stroke-width="1.3" fill="none" /><path d="M67.5 214.3H73.6L70 220.6H74.6L62 231.4L65.6 223H61.4Z" stroke="#b4b4b4" stroke-width="1.2" fill="none" stroke-linejoin="round"/><path d="M1350.2 223.5L1355.3 228.4L1366.7 217" stroke="#b4b4b4" stroke-width="1.4" fill="none" /><path d="M1391 216.5L1404 229.6M1404 216.5L1391 229.6" stroke="#b4b4b4" stroke-width="1.4" fill="none" /><path d="M1438.8 215L1444.9 220.5L1441 223.2L1438.5 228.4L1436.9 229.6L1429.9 222.6L1431.4 221.3L1436.2 219.5Z" stroke="none" stroke-width="0" fill="#252423" /><path d="M1433.4 226L1427.8 231.8" stroke="#252423" stroke-width="1.5" /><path d="M812.2 394L829 394" stroke="#7f9cc4" stroke-width="1.6" /><path d="M994.06 1053.39L997.20 1053.86L997.20 1056.94L994.06 1057.41L993.03 1059.89L994.92 1062.44L992.74 1064.62L990.19 1062.73L987.71 1063.76L987.24 1066.90L984.16 1066.90L983.69 1063.76L981.21 1062.73L978.66 1064.62L976.48 1062.44L978.37 1059.89L977.34 1057.41L974.20 1056.94L974.20 1053.86L977.34 1053.39L978.37 1050.91L976.48 1048.36L978.66 1046.18L981.21 1048.07L983.69 1047.04L984.16 1043.90L987.24 1043.90L987.71 1047.04L990.19 1048.07L992.74 1046.18L994.92 1048.36L993.03 1050.91Z" stroke="#555" stroke-width="1.4" fill="none" stroke-linejoin="round"/><circle cx="985.7" cy="1055.4" r="4.8" stroke="#1f5fb0" stroke-width="1.5" fill="none"/><path d="M1014.8 1055.8L1029.8 1055.8" stroke="#444" stroke-width="1.4" /><path d="M1133.9 1056.2H1149.1M1141.5 1048.6V1063.8" stroke="#444" stroke-width="1.4" fill="none" /><path d="M1281.6 1048V1062M1294.8 1048L1287 1055L1294.8 1062" stroke="#a2a2a2" stroke-width="2.3" fill="none" /><path d="M1313.4 1048L1305.8 1055L1313.4 1062" stroke="#a2a2a2" stroke-width="2.3" fill="none" /><path d="M1420.8 1048L1428.6 1055L1420.8 1062" stroke="#a2a2a2" stroke-width="2.3" fill="none" /><path d="M1439.8 1048L1447.6 1055L1439.8 1062M1452.2 1048V1062" stroke="#a2a2a2" stroke-width="2.3" fill="none" /></svg>
<svg class="a" style="left:0px;top:0px;" width="1898" height="1084" viewBox="0 0 1898 1084" fill="none"><path d="M1793.4 11.4H1815.6V12.6L1806.4 21.8V30.6H1802.4V21.8L1793.4 12.6Z" stroke="#777" stroke-width="1.2" fill="none" stroke-linejoin="round"/><path d="M1845 14.3H1836V29.7H1854.9V23.7M1836 24.9H1844.6V29.7M1847.8 21.4L1854.9 14.3M1849 14.3H1854.9V20.2" stroke="#777" stroke-width="1.3" fill="none" /><circle cx="1877.7" cy="19.9" r="1.6" fill="#777"/><circle cx="1886.5" cy="19.9" r="1.6" fill="#777"/><circle cx="1895.3" cy="19.9" r="1.6" fill="#777"/><path d="M1494 51.2L1485.4 59.3L1494 67.4" stroke="#333" stroke-width="1.3" fill="none" /><circle cx="1767.9" cy="56.4" r="7.6" stroke="#333" stroke-width="1.2" fill="none"/><path d="M1767.9 55V60.6" stroke="#333" stroke-width="1.4" fill="none" /><circle cx="1767.9" cy="52.4" r="0.9" fill="#333"/><path d="M1866 55L1882.4 71.2M1882.4 55L1866 71.2" stroke="#252423" stroke-width="1.5" fill="none" /><circle cx="1505" cy="319.3" r="8.4" stroke="#7a7a7a" stroke-width="1.4" fill="#fff"/><circle cx="1663.7" cy="319.4" r="8.9" stroke="#7a7a7a" stroke-width="1.4" fill="#fff"/><circle cx="1663.7" cy="319.4" r="5.6" fill="#767676"/><rect x="1540.6" y="291" width="6.400000000000091" height="17" stroke="#2b6cb5" stroke-width="1.2" fill="#6aa9e8" /><rect x="1559" y="291" width="6.2999999999999545" height="17" stroke="#2b6cb5" stroke-width="1.2" fill="#6aa9e8" /><rect x="1576.6" y="291" width="5.800000000000182" height="17" stroke="#2b6cb5" stroke-width="1.2" fill="#6aa9e8" /><rect x="1528.2" y="285.4" width="54.2" height="22.6" stroke="#555" stroke-width="1.5" fill="none" /><path d="M1528 290.8H1582.6M1547 285.4V308M1565.3 285.4V308M1534.2 291V308M1540.4 291V308M1553 291V308M1558.9 291V308M1570.6 291V308M1576.4 291V308" stroke="#555" stroke-width="1.3" fill="none" /><path d="M1543.6 281.6V272.8H1579.3V281.6M1560.4 272.8V281.6" stroke="#1f4e9c" stroke-width="1.4" fill="none" /><path d="M1541.0 279.4L1543.6 282.4L1546.1999999999998 279.4" stroke="#1f4e9c" stroke-width="1.5" fill="none" /><path d="M1557.8000000000002 279.4L1560.4 282.4L1563.0 279.4" stroke="#1f4e9c" stroke-width="1.5" fill="none" /><path d="M1576.7 279.4L1579.3 282.4L1581.8999999999999 279.4" stroke="#1f4e9c" stroke-width="1.5" fill="none" /><rect x="1732" y="286" width="7" height="22" stroke="#2b6cb5" stroke-width="1.3" fill="#6aa9e8" /><path d="M1732 286.2H1687.2V307.8H1732M1687 291.6H1732M1701.3 286.2V308M1716.3 286.2V308M1694 291.6V308M1708.6 291.6V308M1723.7 291.6V308" stroke="#555" stroke-width="1.4" fill="none" /><path d="M1735.6 274.4V282.4M1733 279.6L1735.6 282.6L1738.2 279.6" stroke="#1f4e9c" stroke-width="1.5" fill="none" /><path d="M1846 424.6L1860.6 410M1855.4 409.6H1861V415.2M1845.6 419.4V425H1851.2" stroke="#333" stroke-width="1.2" fill="none" /><path d="M1486.4 608.6C1483.2 606 1483.6 598.6 1489.5 598.4C1495.4 598.6 1495.8 606 1492.6 608.6V611H1486.4Z M1486.6 613.4H1492.4" stroke="#666" stroke-width="1.1" fill="none" stroke-linejoin="round"/><path d="M1840.6 748.2L1849 756.2L1857.4 748.2" stroke="#333" stroke-width="1.3" fill="none" /><path d="M1860.6 885.8L1869.6 876.8M1866 886L1869.8 882.2" stroke="#333" stroke-width="1.1" fill="none" /></svg>
<div class="a" style="left:0;top:0;width:1898px;height:1px;background:repeating-linear-gradient(90deg,#fff 0 1px,#5c5c5c 1px 3.4px,#fff 3.4px 6px);"></div>
<div class="a" style="left:0;top:1px;width:1898px;height:1px;background:repeating-linear-gradient(90deg,#fff 0 1px,#c4c4c4 1px 3.4px,#fff 3.4px 6px);"></div>
<div class="a" style="left:0;top:1080px;width:1898px;height:4px;background:repeating-linear-gradient(90deg,#fff 0 1.2px,#6c6c6c 1.2px 4px,#fff 4px 6px);"></div>
<div class="a" style="left:0px;top:1080px;width:1898px;height:1px;background:rgba(150,150,150,.55);"></div>
<div class="a" style="left:0px;top:2px;width:1px;height:1078px;background:#8e8e8e;"></div>
<div class="a" style="left:0px;top:2px;width:14px;height:4px;background:#9e9e9e;"></div>
<div class="a" style="left:0px;top:2px;width:5px;height:13px;background:#9e9e9e;"></div>
<div class="a" style="left:0px;top:1077px;width:14px;height:3px;background:#9e9e9e;"></div>
<div class="a" style="left:0px;top:1068px;width:5px;height:12px;background:#9e9e9e;"></div>
<div class="a" style="left:944px;top:1px;width:18px;height:5px;background:#9e9e9e;"></div>
<div class="a" style="left:944px;top:1077px;width:18px;height:3px;background:#9e9e9e;"></div>
<div class="a" style="left:0px;top:532px;width:5px;height:17px;background:#9e9e9e;"></div>
<div class="a" style="left:1892px;top:1077px;width:6px;height:3px;background:#9e9e9e;"></div>
<div class="a" style="left:1892px;top:1px;width:6px;height:2px;background:#9e9e9e;"></div>
</body></html>
